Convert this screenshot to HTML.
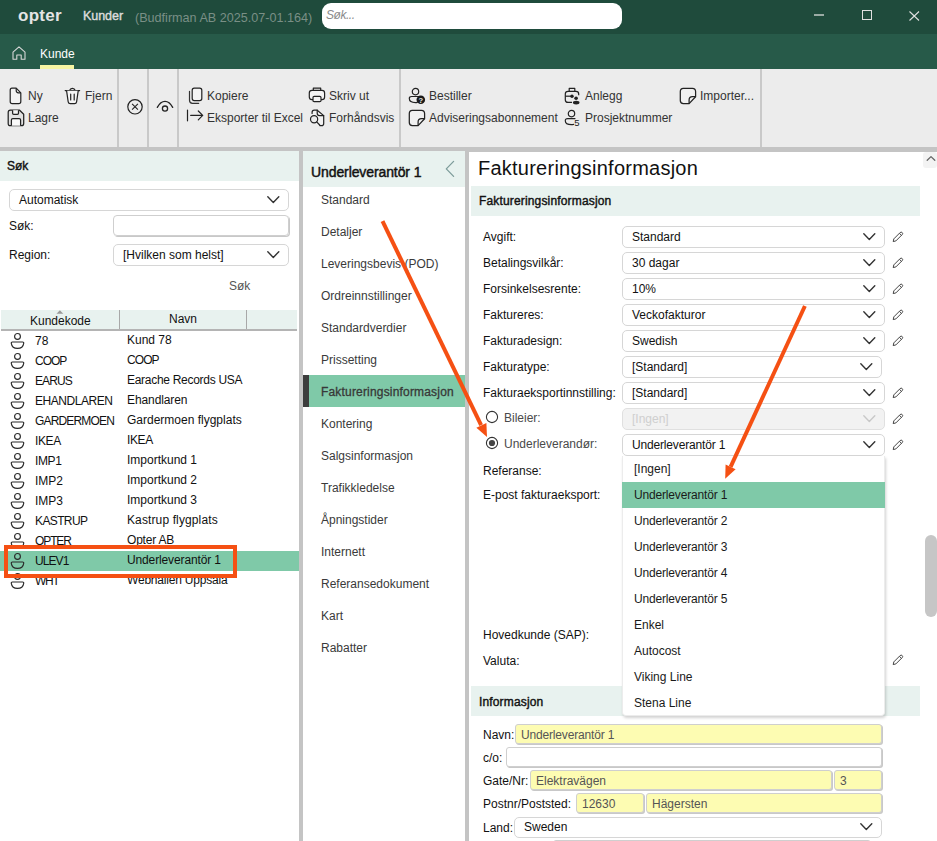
<!DOCTYPE html>
<html><head><meta charset="utf-8">
<style>
*{box-sizing:border-box;margin:0;padding:0}
html,body{width:937px;height:841px;overflow:hidden;background:#c4c4c4;font-family:"Liberation Sans",sans-serif;font-size:12px;color:#111}
.a{position:absolute}
.t{position:absolute;white-space:pre;line-height:12px;font-size:12px}
svg{position:absolute;overflow:visible}
#title{left:0;top:0;width:937px;height:34px;background:#1f4b3c}
#tabs{left:0;top:34px;width:937px;height:35px;background:#275a49}
#tool{left:0;top:69px;width:937px;height:78px;background:#ececec}
.sep{position:absolute;top:69px;width:2px;height:78px;background:#c9c9c9}
.tb{color:#333}
#left{left:0;top:151px;width:299px;height:690px;background:#fff}
#mid{left:303px;top:151px;width:162px;height:690px;background:#fff}
#right{left:469px;top:152px;width:468px;height:689px;background:#fff}
.hdr{position:absolute;background:#e8f2ef}
.dd{position:absolute;border:1px solid #d6d6d6;border-radius:5px;background:#fff}
.inp{position:absolute;border:1px solid #cfcfcf;border-radius:3px;box-shadow:1px 1px 0 #c8c8c8}
.yl{background:#fdfcb2}
.nav{color:#3a3a3a}
.lbl{color:#111}
</style></head><body>
<!-- title bar -->
<div class="a" id="title"></div>
<div class="t" style="left:18px;top:7px;font-size:17px;line-height:17px;font-weight:bold;color:#e4e4e4;letter-spacing:0.25px">opter</div>
<div class="t" style="left:83px;top:10px;font-size:12.5px;line-height:12.5px;color:#dcdcdc;letter-spacing:-0.05px;-webkit-text-stroke:0.4px #dcdcdc">Kunder</div>
<div class="t" style="left:135px;top:12px;font-size:12.6px;line-height:12.6px;color:#7a8f86">(Budfirman AB 2025.07-01.164)</div>
<div class="a" style="left:322px;top:3px;width:300px;height:26px;background:#fff;border-radius:9px"></div>
<div class="t" style="left:326px;top:9px;font-style:italic;color:#8a8a8a;letter-spacing:-0.45px">Søk...</div>
<div class="a" style="left:814px;top:14px;width:10px;height:2px;background:#9aaba4"></div>
<div class="a" style="left:862px;top:10px;width:10px;height:10px;border:1px solid #e0e0e0"></div>
<svg style="left:909px;top:11px" width="11" height="10"><path d="M0.5 0.5L10 9.5M10 0.5L0.5 9.5" stroke="#e0e0e0" stroke-width="1.1" fill="none"/></svg>

<!-- tabs -->
<div class="a" id="tabs"></div>
<svg style="left:12px;top:46px" width="14" height="14"><path d="M1 13.3V6.2L7 0.8L13 6.2V13.3H9.2V9H4.8V13.3Z" stroke="#d8d8d8" stroke-width="1.1" fill="none" stroke-linejoin="round"/></svg>
<div class="t" style="left:40px;top:48px;color:#fff">Kunde</div>
<div class="a" style="left:40px;top:65px;width:34px;height:4px;background:#f7f5a3"></div>

<!-- toolbar -->
<div class="a" id="tool"></div>
<div class="sep" style="left:117px"></div>
<div class="sep" style="left:147px"></div>
<div class="sep" style="left:177px"></div>
<div class="sep" style="left:399px"></div>
<div class="sep" style="left:760px"></div>
<div class="t tb" style="left:28px;top:90px">Ny</div>
<div class="t tb" style="left:85px;top:90px">Fjern</div>
<div class="t tb" style="left:28px;top:112px">Lagre</div>
<div class="t tb" style="left:207px;top:90px">Kopiere</div>
<div class="t tb" style="left:207px;top:112px">Eksporter til Excel</div>
<div class="t tb" style="left:329px;top:90px">Skriv ut</div>
<div class="t tb" style="left:329px;top:112px">Forhåndsvis</div>
<div class="t tb" style="left:429px;top:90px">Bestiller</div>
<div class="t tb" style="left:429px;top:112px">Adviseringsabonnement</div>
<div class="t tb" style="left:585px;top:90px">Anlegg</div>
<div class="t tb" style="left:585px;top:112px">Prosjektnummer</div>
<div class="t tb" style="left:700px;top:90px">Importer...</div>

<svg style="left:9px;top:87px" width="14" height="18"><g fill="none" stroke="#222" stroke-width="1.2" stroke-linejoin="round"><path d="M3 1.2H7.2L11.8 5.8V14.6Q11.8 16.7 9.7 16.7H3.2Q1.2 16.7 1.2 14.6V3.2Q1.2 1.2 3 1.2Z" fill="#f2f2f2"/><path d="M7.2 1.2V3.6Q7.2 5.8 9.4 5.8H11.8"/></g></svg>
<svg style="left:7px;top:109px" width="18" height="18"><g fill="none" stroke="#222" stroke-width="1.25" stroke-linejoin="round"><path d="M3.4 1.2H12.6L16.7 5.3V14.4Q16.7 16.7 14.4 16.7H3.5Q1.2 16.7 1.2 14.4V3.5Q1.2 1.2 3.4 1.2Z" fill="#e2e2e2"/><path d="M5.6 1.2V4.3Q5.6 5.4 6.7 5.4H10.4Q11.5 5.4 11.5 4.3V1.2" fill="#f4f4f4"/><path d="M4.4 16.7V11Q4.4 9.6 5.8 9.6H12.2Q13.6 9.6 13.6 11V16.7" fill="#fafafa"/></g></svg>
<svg style="left:64px;top:87px" width="17" height="18"><g fill="none" stroke="#222" stroke-width="1.2" stroke-linejoin="round" stroke-linecap="round"><path d="M1.2 3.6H15.6"/><path d="M5.6 3.4Q6.2 1.3 8.4 1.3Q10.6 1.3 11.2 3.4"/><path d="M2.6 3.8L4.2 14.8Q4.5 16.6 6.3 16.6H10.5Q12.3 16.6 12.6 14.8L14.2 3.8" fill="#f6f6f6"/><path d="M6.7 7.2V12.9M10.2 7.2V12.9"/></g></svg>
<svg style="left:127px;top:99px" width="16" height="16"><g fill="none" stroke="#222" stroke-width="1.2"><circle cx="8" cy="7.8" r="7.2"/><path d="M5.1 4.9L10.9 10.7M10.9 4.9L5.1 10.7" stroke-width="1.1"/></g></svg>
<svg style="left:156px;top:100px" width="18" height="13"><g fill="none" stroke="#222" stroke-width="1.3" stroke-linecap="round"><path d="M1.3 7.4Q4.5 1.3 9 1.3Q13.5 1.3 16.7 7.4"/><circle cx="9" cy="8.6" r="2.6"/></g></svg>
<svg style="left:188px;top:87px" width="16" height="18"><g fill="none" stroke="#222" stroke-width="1.2" stroke-linejoin="round" stroke-linecap="round"><path d="M6.2 1.2H11.7Q13.8 1.2 13.8 3.3V11.6Q13.8 13.6 11.7 13.6H6.2Q4.2 13.6 4.2 11.6V3.3Q4.2 1.2 6.2 1.2Z" fill="#f4f4f4"/><path d="M1.5 4.3V13.3Q1.5 16.3 4.5 16.3H10.7" stroke="#333"/></g></svg>
<svg style="left:186px;top:109px" width="18" height="13"><g fill="none" stroke="#222" stroke-width="1.2" stroke-linecap="round" stroke-linejoin="round"><path d="M1.5 1V11.8"/><path d="M4.7 6.4H16.7M12.3 2L16.7 6.4L12.3 10.8"/></g></svg>
<svg style="left:308px;top:87px" width="18" height="16"><g fill="none" stroke="#222" stroke-width="1.2" stroke-linejoin="round"><path d="M5.3 3.3V1.2H12.7V3.3"/><path d="M4 3.3H14Q16.6 3.3 16.6 6V10Q16.6 12.6 14 12.6H4Q1.3 12.6 1.3 10V6Q1.3 3.3 4 3.3Z" fill="#f4f4f4"/><path d="M6.2 9.3H11.8Q13 9.3 13 10.5V13.5Q13 14.7 11.8 14.7H6.2Q5 14.7 5 13.5V10.5Q5 9.3 6.2 9.3Z" fill="#f4f4f4"/></g></svg>
<svg style="left:309px;top:109px" width="17" height="18"><g fill="none" stroke="#222" stroke-width="1.2" stroke-linejoin="round" stroke-linecap="round"><path d="M3.1 4.5V3.3Q3.1 1.2 5.2 1.2H8.2L14.7 6.6V14.4Q14.7 16.6 12.6 16.6H10.8" fill="#f2f2f2"/><path d="M8.2 1.2V4.3Q8.2 6.6 10.5 6.6H14.7"/><circle cx="5.1" cy="10.3" r="3.6" fill="#ececec"/><path d="M7.7 12.9L10.7 16"/></g></svg>
<svg style="left:408px;top:87px" width="19" height="18"><g fill="none" stroke="#222" stroke-width="1.2"><circle cx="7.5" cy="4.6" r="3.2"/><path d="M11.3 9.5H3.6Q1.3 9.5 1.3 11.6Q1.3 15.6 7.5 15.6Q8.5 15.6 9.3 15.4" stroke-linecap="round"/></g><circle cx="12.8" cy="12.8" r="4.3" fill="#1a1a1a"/><text x="12.8" y="15.8" font-size="7.5" font-weight="bold" text-anchor="middle" fill="#ececec" font-family="Liberation Sans">?</text></svg>
<svg style="left:408px;top:109px" width="18" height="18"><g fill="none" stroke="#222" stroke-width="1.25" stroke-linejoin="round"><path d="M4.3 1.3H13.4Q16.6 1.3 16.6 4.5V9.8L10.1 16.6H4.3Q1.3 16.6 1.3 13.5V4.5Q1.3 1.3 4.3 1.3Z" fill="#f0f0f0"/><path d="M16.6 9.7H13.4Q10.1 9.7 10.1 13V16.6"/></g></svg>
<svg style="left:679px;top:87px" width="18" height="18"><g fill="none" stroke="#222" stroke-width="1.25" stroke-linejoin="round"><path d="M4.3 1.3H13.4Q16.6 1.3 16.6 4.5V9.8L10.1 16.6H4.3Q1.3 16.6 1.3 13.5V4.5Q1.3 1.3 4.3 1.3Z" fill="#f0f0f0"/><path d="M16.6 9.7H13.4Q10.1 9.7 10.1 13V16.6"/></g></svg>
<svg style="left:564px;top:87px" width="18" height="18"><g fill="none" stroke="#222" stroke-width="1.2" stroke-linejoin="round"><path d="M5.2 4.2V1.4H10.8V4.2"/><path d="M8 15.4H4Q1.3 15.4 1.3 12.7V6.9Q1.3 4.3 4 4.3H12Q14.7 4.3 14.7 6.9V8.3"/><path d="M1.3 9.2H7.8"/></g><circle cx="8" cy="9.2" r="1.7" fill="#222"/><circle cx="12.1" cy="11.3" r="1.8" fill="#222"/><ellipse cx="12.2" cy="15.6" rx="3.3" ry="1.9" fill="#222"/></svg>
<svg style="left:564px;top:109px" width="18" height="18"><g fill="none" stroke="#222" stroke-width="1.2"><circle cx="7.5" cy="4.6" r="3.2"/><path d="M11 9.6H3.6Q1.3 9.6 1.3 11.7Q1.3 15.6 7.5 15.6Q8.6 15.6 9.6 15.4" stroke-linecap="round"/></g><text x="10.2" y="17" font-size="9.5" fill="#222" font-family="Liberation Sans">5</text></svg>


<!-- panels -->
<div class="a" id="left"></div>
<div class="a" id="mid"></div>
<div class="a" id="right"></div>
<div class="hdr" style="left:0;top:151px;width:299px;height:30px"></div>
<div class="t" style="left:7px;top:160px;color:#111;-webkit-text-stroke:0.4px #111">Søk</div>
<div class="dd" style="left:9px;top:189px;width:280px;height:22px"></div>
<div class="t lbl" style="left:19px;top:194px">Automatisk</div>
<svg style="left:267px;top:196px" width="13" height="8"><path d="M0.8 0.8L6.3 6.4L11.8 0.8" fill="none" stroke="#333" stroke-width="1.4" stroke-linecap="round" stroke-linejoin="round"/></svg>
<div class="t lbl" style="left:9px;top:220px">Søk:</div>
<div class="inp" style="left:113px;top:215px;width:176px;height:21px;border-radius:4px"></div>
<div class="t lbl" style="left:9px;top:249px">Region:</div>
<div class="dd" style="left:113px;top:244px;width:176px;height:22px"></div>
<div class="t lbl" style="left:123px;top:249px">[Hvilken som helst]</div>
<svg style="left:267px;top:251px" width="13" height="8"><path d="M0.8 0.8L6.3 6.4L11.8 0.8" fill="none" stroke="#333" stroke-width="1.4" stroke-linecap="round" stroke-linejoin="round"/></svg>
<div class="t" style="left:229px;top:280px;color:#555">Søk</div>
<div class="hdr" style="left:1px;top:310px;width:296px;height:19px"></div>
<div class="a" style="left:1px;top:329px;width:296px;height:2px;background:#b4b4b4"></div>
<div class="a" style="left:119px;top:310px;width:1px;height:19px;background:#a8a8a8"></div>
<div class="a" style="left:246px;top:310px;width:1px;height:19px;background:#a8a8a8"></div>
<svg style="left:56px;top:310px" width="8" height="4"><path d="M0.5 3.8L3.9 0.3L7.3 3.8Z" fill="#999"/></svg>
<div class="t lbl" style="left:30px;top:315px">Kundekode</div>
<div class="t lbl" style="left:169px;top:313px">Navn</div>
<div class="a" style="left:0;top:551px;width:299px;height:20px;background:#7fc9a8"></div>
<svg style="left:10px;top:333px" width="15" height="16"><g fill="none" stroke="#2a2a2a" stroke-width="1.15" stroke-linejoin="round"><circle cx="7.5" cy="3.4" r="2.9"/><path d="M2.4 9H12.6Q13.9 9 13.7 10.3Q13 15.4 7.5 15.4Q2 15.4 1.3 10.3Q1.1 9 2.4 9Z"/></g></svg>
<div class="t lbl" style="left:35px;top:335px;letter-spacing:0px">78</div>
<div class="t lbl" style="left:127px;top:334px;letter-spacing:0px">Kund 78</div>
<svg style="left:10px;top:353px" width="15" height="16"><g fill="none" stroke="#2a2a2a" stroke-width="1.15" stroke-linejoin="round"><circle cx="7.5" cy="3.4" r="2.9"/><path d="M2.4 9H12.6Q13.9 9 13.7 10.3Q13 15.4 7.5 15.4Q2 15.4 1.3 10.3Q1.1 9 2.4 9Z"/></g></svg>
<div class="t lbl" style="left:35px;top:355px;letter-spacing:-1.0px">COOP</div>
<div class="t lbl" style="left:127px;top:354px;letter-spacing:-0.93px">COOP</div>
<svg style="left:10px;top:373px" width="15" height="16"><g fill="none" stroke="#2a2a2a" stroke-width="1.15" stroke-linejoin="round"><circle cx="7.5" cy="3.4" r="2.9"/><path d="M2.4 9H12.6Q13.9 9 13.7 10.3Q13 15.4 7.5 15.4Q2 15.4 1.3 10.3Q1.1 9 2.4 9Z"/></g></svg>
<div class="t lbl" style="left:35px;top:375px;letter-spacing:-0.92px">EARUS</div>
<div class="t lbl" style="left:127px;top:374px;letter-spacing:-0.29px">Earache Records USA</div>
<svg style="left:10px;top:393px" width="15" height="16"><g fill="none" stroke="#2a2a2a" stroke-width="1.15" stroke-linejoin="round"><circle cx="7.5" cy="3.4" r="2.9"/><path d="M2.4 9H12.6Q13.9 9 13.7 10.3Q13 15.4 7.5 15.4Q2 15.4 1.3 10.3Q1.1 9 2.4 9Z"/></g></svg>
<div class="t lbl" style="left:35px;top:395px;letter-spacing:-0.46px">EHANDLAREN</div>
<div class="t lbl" style="left:127px;top:394px;letter-spacing:-0.1px">Ehandlaren</div>
<svg style="left:10px;top:413px" width="15" height="16"><g fill="none" stroke="#2a2a2a" stroke-width="1.15" stroke-linejoin="round"><circle cx="7.5" cy="3.4" r="2.9"/><path d="M2.4 9H12.6Q13.9 9 13.7 10.3Q13 15.4 7.5 15.4Q2 15.4 1.3 10.3Q1.1 9 2.4 9Z"/></g></svg>
<div class="t lbl" style="left:35px;top:415px;letter-spacing:-0.83px">GARDERMOEN</div>
<div class="t lbl" style="left:127px;top:414px;letter-spacing:0px">Gardermoen flygplats</div>
<svg style="left:10px;top:433px" width="15" height="16"><g fill="none" stroke="#2a2a2a" stroke-width="1.15" stroke-linejoin="round"><circle cx="7.5" cy="3.4" r="2.9"/><path d="M2.4 9H12.6Q13.9 9 13.7 10.3Q13 15.4 7.5 15.4Q2 15.4 1.3 10.3Q1.1 9 2.4 9Z"/></g></svg>
<div class="t lbl" style="left:35px;top:435px;letter-spacing:-0.4px">IKEA</div>
<div class="t lbl" style="left:127px;top:434px;letter-spacing:-0.4px">IKEA</div>
<svg style="left:10px;top:453px" width="15" height="16"><g fill="none" stroke="#2a2a2a" stroke-width="1.15" stroke-linejoin="round"><circle cx="7.5" cy="3.4" r="2.9"/><path d="M2.4 9H12.6Q13.9 9 13.7 10.3Q13 15.4 7.5 15.4Q2 15.4 1.3 10.3Q1.1 9 2.4 9Z"/></g></svg>
<div class="t lbl" style="left:35px;top:455px;letter-spacing:-0.4px">IMP1</div>
<div class="t lbl" style="left:127px;top:454px;letter-spacing:0px">Importkund 1</div>
<svg style="left:10px;top:473px" width="15" height="16"><g fill="none" stroke="#2a2a2a" stroke-width="1.15" stroke-linejoin="round"><circle cx="7.5" cy="3.4" r="2.9"/><path d="M2.4 9H12.6Q13.9 9 13.7 10.3Q13 15.4 7.5 15.4Q2 15.4 1.3 10.3Q1.1 9 2.4 9Z"/></g></svg>
<div class="t lbl" style="left:35px;top:475px;letter-spacing:0px">IMP2</div>
<div class="t lbl" style="left:127px;top:474px;letter-spacing:0px">Importkund 2</div>
<svg style="left:10px;top:493px" width="15" height="16"><g fill="none" stroke="#2a2a2a" stroke-width="1.15" stroke-linejoin="round"><circle cx="7.5" cy="3.4" r="2.9"/><path d="M2.4 9H12.6Q13.9 9 13.7 10.3Q13 15.4 7.5 15.4Q2 15.4 1.3 10.3Q1.1 9 2.4 9Z"/></g></svg>
<div class="t lbl" style="left:35px;top:495px;letter-spacing:0px">IMP3</div>
<div class="t lbl" style="left:127px;top:494px;letter-spacing:0px">Importkund 3</div>
<svg style="left:10px;top:513px" width="15" height="16"><g fill="none" stroke="#2a2a2a" stroke-width="1.15" stroke-linejoin="round"><circle cx="7.5" cy="3.4" r="2.9"/><path d="M2.4 9H12.6Q13.9 9 13.7 10.3Q13 15.4 7.5 15.4Q2 15.4 1.3 10.3Q1.1 9 2.4 9Z"/></g></svg>
<div class="t lbl" style="left:35px;top:515px;letter-spacing:-0.62px">KASTRUP</div>
<div class="t lbl" style="left:127px;top:514px;letter-spacing:0.12px">Kastrup flygplats</div>
<svg style="left:10px;top:533px" width="15" height="16"><g fill="none" stroke="#2a2a2a" stroke-width="1.15" stroke-linejoin="round"><circle cx="7.5" cy="3.4" r="2.9"/><path d="M2.4 9H12.6Q13.9 9 13.7 10.3Q13 15.4 7.5 15.4Q2 15.4 1.3 10.3Q1.1 9 2.4 9Z"/></g></svg>
<div class="t lbl" style="left:35px;top:535px;letter-spacing:-1.1px">OPTER</div>
<div class="t lbl" style="left:127px;top:534px;letter-spacing:-0.2px">Opter AB</div>
<svg style="left:10px;top:553px" width="15" height="16"><g fill="none" stroke="#2a2a2a" stroke-width="1.15" stroke-linejoin="round"><circle cx="7.5" cy="3.4" r="2.9"/><path d="M2.4 9H12.6Q13.9 9 13.7 10.3Q13 15.4 7.5 15.4Q2 15.4 1.3 10.3Q1.1 9 2.4 9Z"/></g></svg>
<div class="t lbl" style="left:35px;top:555px;letter-spacing:-0.92px">ULEV1</div>
<div class="t lbl" style="left:127px;top:554px;letter-spacing:-0.13px">Underleverantör 1</div>
<svg style="left:10px;top:573px" width="15" height="16"><g fill="none" stroke="#2a2a2a" stroke-width="1.15" stroke-linejoin="round"><circle cx="7.5" cy="3.4" r="2.9"/><path d="M2.4 9H12.6Q13.9 9 13.7 10.3Q13 15.4 7.5 15.4Q2 15.4 1.3 10.3Q1.1 9 2.4 9Z"/></g></svg>
<div class="t lbl" style="left:35px;top:575px;letter-spacing:-1.3px">WHT</div>
<div class="t lbl" style="left:127px;top:574px;letter-spacing:-0.2px">Webhallen Uppsala</div>
<div class="hdr" style="left:303px;top:151px;width:162px;height:36px"></div>
<div class="t" style="left:311px;top:165px;font-size:14px;line-height:14px;color:#111;letter-spacing:-0.1px;-webkit-text-stroke:0.45px #111">Underleverantör 1</div>
<svg style="left:445px;top:161px" width="10" height="16"><path d="M8.6 0.4L1.3 7.9L8.6 15.4" fill="none" stroke="#7d9c9a" stroke-width="1.3" stroke-linecap="round" stroke-linejoin="round"/></svg>
<div class="a" style="left:303px;top:375px;width:162px;height:32px;background:#7fc9a8"></div>
<div class="a" style="left:303px;top:375px;width:6px;height:32px;background:#3d3d3d"></div>
<div class="t nav" style="left:321px;top:194px;color:#3a3a3a">Standard</div>
<div class="t nav" style="left:321px;top:226px;color:#3a3a3a">Detaljer</div>
<div class="t nav" style="left:321px;top:258px;color:#3a3a3a">Leveringsbevis (POD)</div>
<div class="t nav" style="left:321px;top:290px;color:#3a3a3a">Ordreinnstillinger</div>
<div class="t nav" style="left:321px;top:322px;color:#3a3a3a">Standardverdier</div>
<div class="t nav" style="left:321px;top:354px;color:#3a3a3a">Prissetting</div>
<div class="t nav" style="left:321px;top:386px;color:#383838;letter-spacing:0.18px;-webkit-text-stroke:0.3px #383838">Faktureringsinformasjon</div>
<div class="t nav" style="left:321px;top:418px;color:#3a3a3a">Kontering</div>
<div class="t nav" style="left:321px;top:450px;color:#3a3a3a">Salgsinformasjon</div>
<div class="t nav" style="left:321px;top:482px;color:#3a3a3a">Trafikkledelse</div>
<div class="t nav" style="left:321px;top:514px;color:#3a3a3a">Åpningstider</div>
<div class="t nav" style="left:321px;top:546px;color:#3a3a3a">Internett</div>
<div class="t nav" style="left:321px;top:578px;color:#3a3a3a">Referansedokument</div>
<div class="t nav" style="left:321px;top:610px;color:#3a3a3a">Kart</div>
<div class="t nav" style="left:321px;top:642px;color:#3a3a3a">Rabatter</div>
<div class="t" style="left:478px;top:158px;font-size:20px;line-height:20px;color:#111;letter-spacing:0.24px">Faktureringsinformasjon</div>
<div class="hdr" style="left:471px;top:186px;width:449px;height:30px"></div>
<div class="t" style="left:479px;top:195px;color:#111;letter-spacing:0.16px;-webkit-text-stroke:0.4px #111">Faktureringsinformasjon</div>
<div class="dd" style="left:622px;top:226px;width:263px;height:22px;background:#fff;border-color:#d6d6d6"></div>
<div class="t" style="left:632px;top:231px;color:#111">Standard</div>
<svg style="left:863px;top:233px" width="13" height="8"><path d="M0.8 0.8L6.3 6.4L11.8 0.8" fill="none" stroke="#333" stroke-width="1.4" stroke-linecap="round" stroke-linejoin="round"/></svg>
<svg style="left:892px;top:231px" width="12" height="12"><path d="M1.2 10.6L1.8 7.9L8.1 1.6Q9.2 0.6 10.2 1.6Q11.2 2.6 10.2 3.6L3.9 9.9Z M7.4 2.3L9.5 4.4" fill="none" stroke="#444" stroke-width="1" stroke-linejoin="round"/></svg>
<div class="t lbl" style="left:483px;top:231px">Avgift:</div>
<div class="dd" style="left:622px;top:252px;width:263px;height:22px;background:#fff;border-color:#d6d6d6"></div>
<div class="t" style="left:632px;top:257px;color:#111">30 dagar</div>
<svg style="left:863px;top:259px" width="13" height="8"><path d="M0.8 0.8L6.3 6.4L11.8 0.8" fill="none" stroke="#333" stroke-width="1.4" stroke-linecap="round" stroke-linejoin="round"/></svg>
<svg style="left:892px;top:257px" width="12" height="12"><path d="M1.2 10.6L1.8 7.9L8.1 1.6Q9.2 0.6 10.2 1.6Q11.2 2.6 10.2 3.6L3.9 9.9Z M7.4 2.3L9.5 4.4" fill="none" stroke="#444" stroke-width="1" stroke-linejoin="round"/></svg>
<div class="t lbl" style="left:483px;top:257px">Betalingsvilkår:</div>
<div class="dd" style="left:622px;top:278px;width:263px;height:22px;background:#fff;border-color:#d6d6d6"></div>
<div class="t" style="left:632px;top:283px;color:#111">10%</div>
<svg style="left:863px;top:285px" width="13" height="8"><path d="M0.8 0.8L6.3 6.4L11.8 0.8" fill="none" stroke="#333" stroke-width="1.4" stroke-linecap="round" stroke-linejoin="round"/></svg>
<svg style="left:892px;top:283px" width="12" height="12"><path d="M1.2 10.6L1.8 7.9L8.1 1.6Q9.2 0.6 10.2 1.6Q11.2 2.6 10.2 3.6L3.9 9.9Z M7.4 2.3L9.5 4.4" fill="none" stroke="#444" stroke-width="1" stroke-linejoin="round"/></svg>
<div class="t lbl" style="left:483px;top:283px">Forsinkelsesrente:</div>
<div class="dd" style="left:622px;top:304px;width:263px;height:22px;background:#fff;border-color:#d6d6d6"></div>
<div class="t" style="left:632px;top:309px;color:#111">Veckofakturor</div>
<svg style="left:863px;top:311px" width="13" height="8"><path d="M0.8 0.8L6.3 6.4L11.8 0.8" fill="none" stroke="#333" stroke-width="1.4" stroke-linecap="round" stroke-linejoin="round"/></svg>
<svg style="left:892px;top:309px" width="12" height="12"><path d="M1.2 10.6L1.8 7.9L8.1 1.6Q9.2 0.6 10.2 1.6Q11.2 2.6 10.2 3.6L3.9 9.9Z M7.4 2.3L9.5 4.4" fill="none" stroke="#444" stroke-width="1" stroke-linejoin="round"/></svg>
<div class="t lbl" style="left:483px;top:309px">Faktureres:</div>
<div class="dd" style="left:622px;top:330px;width:263px;height:22px;background:#fff;border-color:#d6d6d6"></div>
<div class="t" style="left:632px;top:335px;color:#111">Swedish</div>
<svg style="left:863px;top:337px" width="13" height="8"><path d="M0.8 0.8L6.3 6.4L11.8 0.8" fill="none" stroke="#333" stroke-width="1.4" stroke-linecap="round" stroke-linejoin="round"/></svg>
<svg style="left:892px;top:335px" width="12" height="12"><path d="M1.2 10.6L1.8 7.9L8.1 1.6Q9.2 0.6 10.2 1.6Q11.2 2.6 10.2 3.6L3.9 9.9Z M7.4 2.3L9.5 4.4" fill="none" stroke="#444" stroke-width="1" stroke-linejoin="round"/></svg>
<div class="t lbl" style="left:483px;top:335px">Fakturadesign:</div>
<div class="dd" style="left:622px;top:356px;width:260px;height:22px;background:#fff;border-color:#d6d6d6"></div>
<div class="t" style="left:632px;top:361px;color:#111">[Standard]</div>
<svg style="left:860px;top:363px" width="13" height="8"><path d="M0.8 0.8L6.3 6.4L11.8 0.8" fill="none" stroke="#333" stroke-width="1.4" stroke-linecap="round" stroke-linejoin="round"/></svg>
<div class="t lbl" style="left:483px;top:361px">Fakturatype:</div>
<div class="dd" style="left:622px;top:382px;width:263px;height:22px;background:#fff;border-color:#d6d6d6"></div>
<div class="t" style="left:632px;top:387px;color:#111">[Standard]</div>
<svg style="left:863px;top:389px" width="13" height="8"><path d="M0.8 0.8L6.3 6.4L11.8 0.8" fill="none" stroke="#333" stroke-width="1.4" stroke-linecap="round" stroke-linejoin="round"/></svg>
<svg style="left:892px;top:387px" width="12" height="12"><path d="M1.2 10.6L1.8 7.9L8.1 1.6Q9.2 0.6 10.2 1.6Q11.2 2.6 10.2 3.6L3.9 9.9Z M7.4 2.3L9.5 4.4" fill="none" stroke="#444" stroke-width="1" stroke-linejoin="round"/></svg>
<div class="t lbl" style="left:483px;top:387px">Fakturaeksportinnstilling:</div>
<div class="dd" style="left:622px;top:408px;width:263px;height:22px;background:#f2f2f2;border-color:#e0e0e0"></div>
<div class="t" style="left:632px;top:413px;color:#cfcfcf">[Ingen]</div>
<svg style="left:863px;top:415px" width="13" height="8"><path d="M0.8 0.8L6.3 6.4L11.8 0.8" fill="none" stroke="#c8c8c8" stroke-width="1.4" stroke-linecap="round" stroke-linejoin="round"/></svg>
<svg style="left:892px;top:413px" width="12" height="12"><path d="M1.2 10.6L1.8 7.9L8.1 1.6Q9.2 0.6 10.2 1.6Q11.2 2.6 10.2 3.6L3.9 9.9Z M7.4 2.3L9.5 4.4" fill="none" stroke="#444" stroke-width="1" stroke-linejoin="round"/></svg>
<div class="t" style="left:504px;top:412px;color:#4a4a4a">Bileier:</div>
<div class="dd" style="left:622px;top:434px;width:263px;height:22px;background:#fff;border-color:#d6d6d6"></div>
<div class="t" style="left:632px;top:439px;color:#111;letter-spacing:-0.17px">Underleverantör 1</div>
<svg style="left:863px;top:441px" width="13" height="8"><path d="M0.8 0.8L6.3 6.4L11.8 0.8" fill="none" stroke="#333" stroke-width="1.4" stroke-linecap="round" stroke-linejoin="round"/></svg>
<svg style="left:892px;top:439px" width="12" height="12"><path d="M1.2 10.6L1.8 7.9L8.1 1.6Q9.2 0.6 10.2 1.6Q11.2 2.6 10.2 3.6L3.9 9.9Z M7.4 2.3L9.5 4.4" fill="none" stroke="#444" stroke-width="1" stroke-linejoin="round"/></svg>
<div class="t" style="left:504px;top:438px;color:#4a4a4a">Underleverandør:</div>
<svg style="left:485px;top:410px" width="14" height="14"><circle cx="7" cy="7" r="5.6" fill="#fff" stroke="#333" stroke-width="1.1"/></svg>
<svg style="left:485px;top:436px" width="14" height="14"><circle cx="7" cy="7" r="5.6" fill="#fff" stroke="#333" stroke-width="1.1"/><circle cx="7" cy="7" r="3.1" fill="#444"/></svg>
<div class="t lbl" style="left:483px;top:465px">Referanse:</div>
<div class="t lbl" style="left:483px;top:489px">E-post fakturaeksport:</div>
<div class="t lbl" style="left:483px;top:629px">Hovedkunde (SAP):</div>
<div class="t lbl" style="left:483px;top:655px">Valuta:</div>
<svg style="left:892px;top:654px" width="12" height="12"><path d="M1.2 10.6L1.8 7.9L8.1 1.6Q9.2 0.6 10.2 1.6Q11.2 2.6 10.2 3.6L3.9 9.9Z M7.4 2.3L9.5 4.4" fill="none" stroke="#444" stroke-width="1" stroke-linejoin="round"/></svg>
<div class="hdr" style="left:471px;top:686px;width:449px;height:30px"></div>
<div class="t" style="left:479px;top:696px;color:#111;letter-spacing:0.15px;-webkit-text-stroke:0.4px #111">Informasjon</div>
<div class="t lbl" style="left:483px;top:729px">Navn:</div>
<div class="inp yl" style="left:515px;top:724px;width:367px;height:20px;"></div>
<div class="t" style="left:521px;top:729px;color:#555;letter-spacing:-0.17px">Underleverantör 1</div>
<div class="t lbl" style="left:483px;top:752px">c/o:</div>
<div class="inp" style="left:506px;top:747px;width:376px;height:20px;background:#fff;"></div>
<div class="t lbl" style="left:483px;top:775px">Gate/Nr:</div>
<div class="inp yl" style="left:530px;top:770px;width:302px;height:20px;"></div>
<div class="t" style="left:536px;top:775px;color:#555">Elektravägen</div>
<div class="inp yl" style="left:834px;top:770px;width:48px;height:20px;"></div>
<div class="t" style="left:840px;top:775px;color:#555">3</div>
<div class="t lbl" style="left:483px;top:798px">Postnr/Poststed:</div>
<div class="inp yl" style="left:576px;top:793px;width:68px;height:20px;"></div>
<div class="t" style="left:582px;top:798px;color:#555">12630</div>
<div class="inp yl" style="left:646px;top:793px;width:236px;height:20px;"></div>
<div class="t" style="left:652px;top:798px;color:#555">Hägersten</div>
<div class="t lbl" style="left:483px;top:822px">Land:</div>
<div class="dd" style="left:514px;top:817px;width:368px;height:21px"></div>
<div class="t lbl" style="left:524px;top:821px">Sweden</div>
<svg style="left:860px;top:823px" width="13" height="8"><path d="M0.8 0.8L6.3 6.4L11.8 0.8" fill="none" stroke="#333" stroke-width="1.4" stroke-linecap="round" stroke-linejoin="round"/></svg>
<div class="inp" style="left:553px;top:840px;width:318px;height:20px;background:#fff"></div>
<div class="a" style="left:923px;top:152px;width:14px;height:16px;background:#f3f3f3;border-radius:3px"></div>
<svg style="left:926px;top:155px" width="10" height="7"><path d="M1.2 5.3L5 1.6L8.8 5.3" fill="none" stroke="#666" stroke-width="1.3" stroke-linecap="round" stroke-linejoin="round"/></svg>
<div class="a" style="left:925px;top:535px;width:12px;height:82px;background:#c6c6c6;border-radius:6px"></div>
<div class="a" style="left:622px;top:456px;width:263px;height:260px;background:#fff;border:1px solid #ececec;border-top:none;border-radius:0 0 4px 4px;box-shadow:1px 2px 3px rgba(0,0,0,0.18)"></div>
<div class="a" style="left:622px;top:482px;width:263px;height:26px;background:#7fc9a8"></div>
<div class="t lbl" style="left:634px;top:463px;color:#1a1a1a">[Ingen]</div>
<div class="t lbl" style="left:634px;top:489px;color:#1a1a1a;letter-spacing:-0.17px">Underleverantör 1</div>
<div class="t lbl" style="left:634px;top:515px;color:#1a1a1a;letter-spacing:-0.17px">Underleverantör 2</div>
<div class="t lbl" style="left:634px;top:541px;color:#1a1a1a;letter-spacing:-0.17px">Underleverantör 3</div>
<div class="t lbl" style="left:634px;top:567px;color:#1a1a1a;letter-spacing:-0.17px">Underleverantör 4</div>
<div class="t lbl" style="left:634px;top:593px;color:#1a1a1a;letter-spacing:-0.17px">Underleverantör 5</div>
<div class="t lbl" style="left:634px;top:619px;color:#1a1a1a">Enkel</div>
<div class="t lbl" style="left:634px;top:645px;color:#1a1a1a">Autocost</div>
<div class="t lbl" style="left:634px;top:671px;color:#1a1a1a">Viking Line</div>
<div class="t lbl" style="left:634px;top:697px;color:#1a1a1a">Stena Line</div>
<div class="a" style="left:4px;top:545px;width:233px;height:33px;border:4px solid #f55013"></div>
<svg style="left:0;top:0" width="937" height="841"><g fill="#f55013" stroke="none">
<path d="M380.7 222.0L384.3 220.2L482.9 424.3L479.3 426.1Z"/>
<path d="M487 437L486.4 423L476.4 427.7Z"/>
<path d="M803.1 305.2L806.7 306.8L732.4 467.7L728.8 466.1Z"/>
<path d="M725.2 478.7L735.6 469.2L725.6 464.6Z"/>
</g></svg>
</body></html>
